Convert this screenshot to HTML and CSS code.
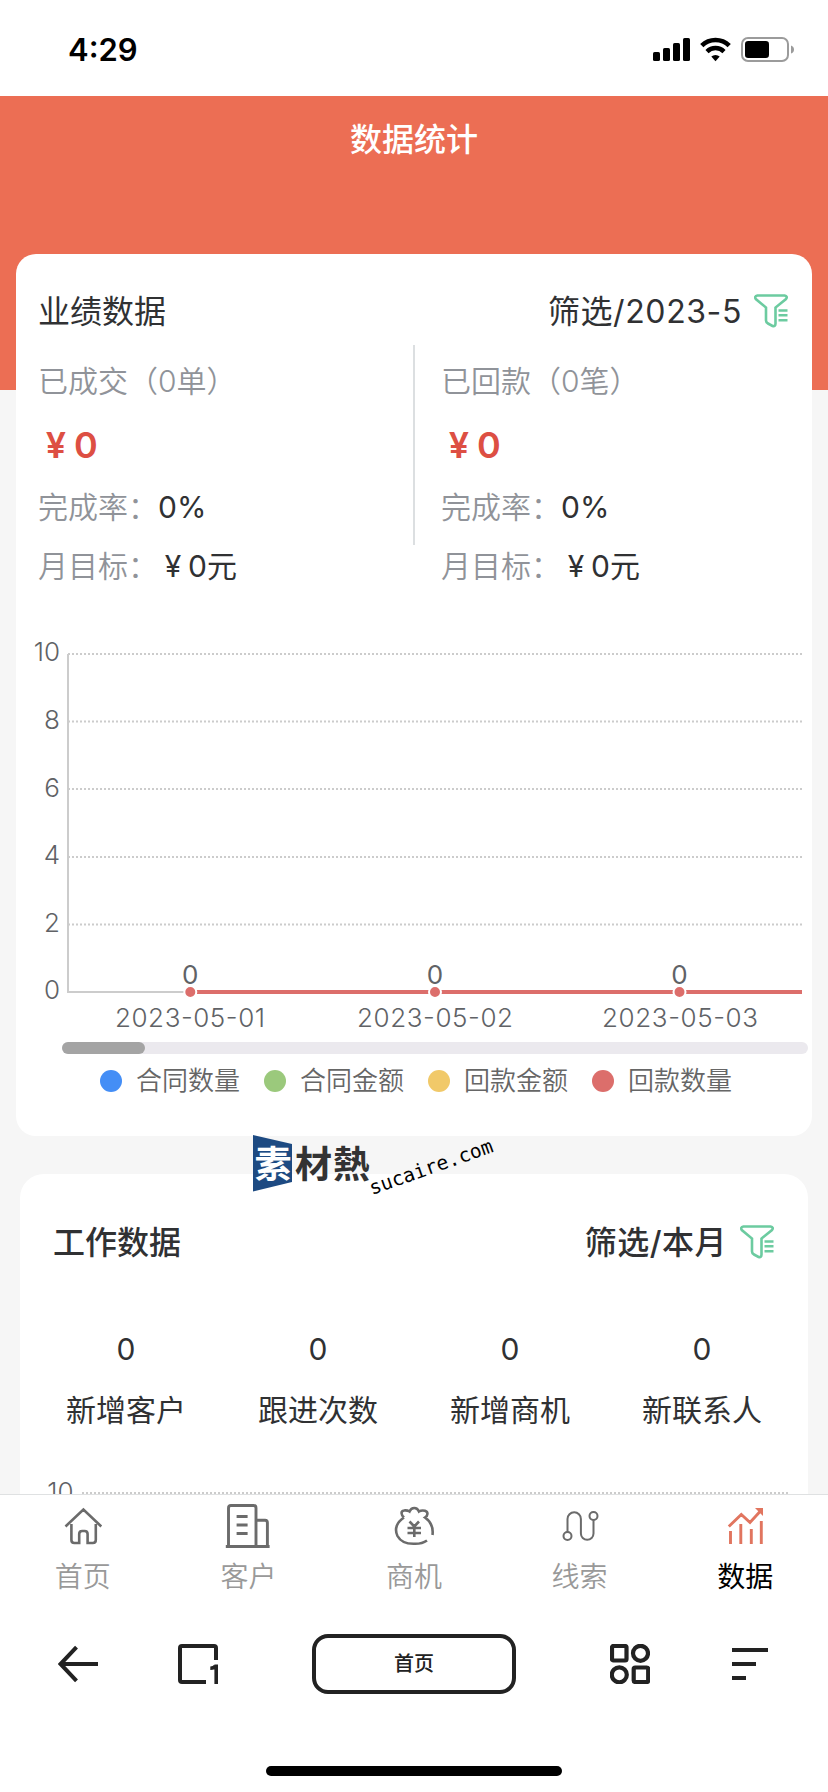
FILE: index.html
```html
<!DOCTYPE html>
<html lang="zh-CN">
<head>
<meta charset="utf-8">
<title>数据统计</title>
<link rel="stylesheet" href="styles.css">
</head>
<body>
<div class="phone">
  <header class="status">
    <span class="clock">4:29</span>
    <svg class="status-icons" viewBox="652 34 144 30" width="144" height="30">
      <rect x="653" y="52" width="7" height="9" rx="1.6"/>
      <rect x="663" y="48" width="7" height="13" rx="1.6"/>
      <rect x="673" y="43" width="7" height="18" rx="1.6"/>
      <rect x="683" y="38" width="7" height="23" rx="1.6"/>
      <path d="M701.8 45.6a19.5 19.5 0 0 1 27.4 0" fill="none" stroke="#000" stroke-width="4.6"/>
      <path d="M707 51.6a12 12 0 0 1 17 0" fill="none" stroke="#000" stroke-width="4.4"/>
      <path d="M711.3 56.6a6 6 0 0 1 8.4 0l-4.2 4.6z"/>
      <rect x="742" y="38" width="46" height="23" rx="6" fill="none" stroke="#9b9b9b" stroke-width="2"/>
      <rect x="745" y="41" width="24" height="17" rx="3.2"/>
      <path d="M791 45.500q3 1 3 4t-3 4z" fill="#9b9b9b"/>
    </svg>
  </header>

  <main class="page">
    <div class="hero"><h1>数据统计</h1></div>

    <section class="card sales">
      <div class="card-head">
        <h2>业绩数据</h2>
        <div class="filter"><span class="filter-date">筛选/2023-5</span>
          <svg class="funnel" viewBox="0 0 34 34"><path d="M3.500 1.500H30.500Q34 2.300 32 5L21.500 13.500V29.500Q21.500 32.800 18.500 32L14 29.500Q12 28.500 12 26.500V13.500L1.800 5Q0 2.300 3.500 1.500z"/><path d="M24.500 16.500h9M24.500 21.300h9M24.500 26.300h9"/></svg>
        </div>
      </div>
      <div class="totals">
        <div class="total">
          <p class="muted">已成交（0单）</p>
          <p class="amount"><span class="yen">¥</span>0</p>
          <p class="rate"><span class="muted">完成率：</span>0%</p>
          <p class="goal"><span class="muted">月目标：</span><span class="yen">¥</span>0元</p>
        </div>
        <div class="total">
          <p class="muted">已回款（0笔）</p>
          <p class="amount"><span class="yen">¥</span>0</p>
          <p class="rate"><span class="muted">完成率：</span>0%</p>
          <p class="goal"><span class="muted">月目标：</span><span class="yen">¥</span>0元</p>
        </div>
      </div>
      <svg class="chart" viewBox="16 620 796 422" width="796" height="422">
        <g class="grid">
          <path d="M68 654H802M68 721.500H802M68 789H802M68 857H802M68 924.500H802"/>
        </g>
        <path class="axis" d="M68 654V992H802"/>
        <g class="ylab">
          <text x="60" y="661">10</text><text x="60" y="729">8</text><text x="60" y="796.500">6</text>
          <text x="60" y="864">4</text><text x="60" y="932">2</text><text x="60" y="999">0</text>
        </g>
        <path d="M190 992H802" stroke="#dc6e6b" stroke-width="4"/>
        <g class="points">
          <circle cx="190.300" cy="992" r="6"/><circle cx="435" cy="992" r="6"/><circle cx="679.500" cy="992" r="6"/>
        </g>
        <g class="vlab">
          <text x="190.300" y="984">0</text><text x="435" y="984">0</text><text x="679.500" y="984">0</text>
        </g>
        <g class="xlab">
          <text x="115" y="1027" textLength="150">2023-05-01</text>
          <text x="357" y="1027" textLength="156">2023-05-02</text>
          <text x="602" y="1027" textLength="156">2023-05-03</text>
        </g>
      </svg>
      <div class="slider"><div class="thumb"></div></div>
      <ul class="legend">
        <li><i class="dot blue"></i>合同数量</li>
        <li><i class="dot green"></i>合同金额</li>
        <li><i class="dot yellow"></i>回款金额</li>
        <li><i class="dot red"></i>回款数量</li>
      </ul>
    </section>

    <section class="card work">
      <div class="card-head">
        <h2>工作数据</h2>
        <div class="filter"><span class="filter-month">筛选/本月</span>
          <svg class="funnel" viewBox="0 0 34 34"><path d="M3.500 1.500H30.500Q34 2.300 32 5L21.500 13.500V29.500Q21.500 32.800 18.500 32L14 29.500Q12 28.500 12 26.500V13.500L1.800 5Q0 2.300 3.500 1.500z"/><path d="M24.500 16.500h9M24.500 21.300h9M24.500 26.300h9"/></svg>
        </div>
      </div>
      <div class="stats">
        <div><b>0</b><span>新增客户</span></div>
        <div><b>0</b><span>跟进次数</span></div>
        <div><b>0</b><span>新增商机</span></div>
        <div><b>0</b><span>新联系人</span></div>
      </div>
      <svg class="chart" viewBox="20 1470 788 60" width="788" height="60">
        <g class="grid"><path d="M82 1493H788"/></g>
        <g class="ylab"><text x="73.500" y="1501">10</text></g>
      </svg>
    </section>
  </main>

  <nav class="tabs">
    <a class="tab">
      <svg viewBox="0 0 48 48"><path d="M6.500 24.500 24.400 7.500 42.300 24.500M12.400 22v16q0 3 3 3h4.800v-9q0-3 3-3h2.400q3 0 3 3v9h5.200q3 0 3-3v-16"/></svg>
      首页</a>
    <a class="tab">
      <svg viewBox="0 0 48 48" class="w3"><path d="M4.500 44V6q0-2.500 2.500-2.500h22.500q2.500 0 2.500 2.500v38M32 18.300h9q2.400 0 2.400 2.400V44M1.800 44.500h43.800M12.600 14.500h11M12.600 23h11M12.600 31.500h11"/></svg>
      客户</a>
    <a class="tab">
      <svg viewBox="0 0 48 48"><path d="M14 15.500C11 13 10.500 9 14 8.500Q17 8 19.500 9.500Q21 6 24.300 6Q27.500 6 29 9.500Q31.500 8 35 8.800C38.500 10 38 13.500 35 15.500C40 19 43.500 25 42.500 33M14 15.500C7 20 4 27 7.500 34C11 40.500 18 42 24.500 41.800Q32 42 37 38.500M19.500 19.500 24.300 24.500 29 19.500M17.500 26h13.500M17.500 31h13.500M24.300 24.500v10.500"/></svg>
      商机</a>
    <a class="tab">
      <svg viewBox="0 0 48 48" class="w2"><circle cx="11.500" cy="34" r="4"/><circle cx="37.500" cy="14" r="4"/><path d="M11.500 30V17a6.700 6.700 0 0 1 13.400 0V31.500a6.300 6.300 0 0 0 12.600 0V18"/></svg>
      线索</a>
    <a class="tab active">
      <svg viewBox="0 0 48 48" class="w3"><path d="M7.800 24.500 20.300 12.500 29 20.500 39.500 9M9.500 29v13M19.800 22v20M30.300 27v15M40.300 19v23"/><path class="tip" d="M34 6H42V14z"/></svg>
      数据</a>
  </nav>

  <div class="browser">
    <svg class="b-back" viewBox="0 0 40 40" width="40" height="40"><path d="M40 20H3M18.500 3.200 2.500 20 18.500 36.800"/></svg>
    <svg class="b-pages" viewBox="0 0 40 40" width="40" height="40"><path d="M38 16V4q0-2-2-2H4q-2 0-2 2v32q0 2 2 2h24"/><path class="page-count" d="M32.300 24.300q4 0 5.200-2.500M38.200 20.500V40"/></svg>
    <span class="b-title">首页</span>
    <svg class="b-apps" viewBox="0 0 40 40" width="40" height="40"><rect x="2" y="2" width="14.500" height="14.500" rx="1.500"/><circle cx="30.500" cy="9.300" r="7.500"/><circle cx="9.300" cy="30.800" r="7.500"/><rect x="23.700" y="23.500" width="14.500" height="14.500" rx="1.500"/></svg>
    <svg class="b-menu" viewBox="0 0 36 40" width="36" height="40"><path d="M0 6H36M0 20H24M0 34H14"/></svg>
  </div>
  <div class="home-bar"></div>

  <svg class="watermark" viewBox="250 1130 250 70" width="250" height="70">
    <path d="M253 1135 292 1144V1182L253 1191.500z" fill="#1d4a82"/>
    <text x="254.500" y="1178" class="wm-cn" fill="#fff">素</text>
    <text x="295" y="1178" class="wm-cn" fill="#333" textLength="75">材熱</text>
    <text class="wm-url" transform="translate(372 1195) rotate(-19.5)">sucaire.com</text>
  </svg>
</div>
</body>
</html>
```
FILE: styles.css
```css
* { box-sizing: border-box; margin: 0; padding: 0; }

body {
  width: 828px;
  height: 1792px;
  overflow: hidden;
  background: #fff;
  color: #303133;
  font-family: Inter, "Noto Sans CJK SC", sans-serif;
}

.phone {
  position: relative;
  display: flex;
  flex-direction: column;
  width: 828px;
  height: 1792px;
}

.status {
  flex: none;
  display: flex;
  justify-content: space-between;
  align-items: center;
  height: 96px;
  padding: 2px 32px 0 68px;
  color: #000;
}
.clock { padding-top: 2px; font-size: 31px; font-weight: 600; line-height: 40px; }

.page {
  flex: none;
  height: 1398px;
  overflow: hidden;
  background: #f6f6f6;
}
.hero { height: 294px; background: #ec6e54; text-align: center; }
.hero h1 {
  padding-top: 23px;
  color: #fff;
  font-size: 32px;
  font-weight: 500;
  line-height: 42px;
}

.card { background: #fff; }
.card-head { display: flex; justify-content: space-between; align-items: center; }
.card-head h2 { padding-top: 2px; font-size: 32px; font-weight: 400; line-height: 40px; }
.filter { display: flex; align-items: center; font-size: 32px; line-height: 40px; }
.filter-date { padding-top: 2px; letter-spacing: 0.6px; }
.filter-month { padding-top: 2px; letter-spacing: 0.5px; }
.funnel { width: 34px; height: 34px; fill: none; stroke: #6ccba0; stroke-width: 2.6; }

.sales {
  height: 882px;
  margin: -136px 16px 38px;
  border-radius: 20px;
}
.sales .card-head { height: 91px; padding: 22px 24px 0 22px; }
.sales .funnel { margin-left: 12px; }

.totals {
  display: grid;
  grid-template-columns: 397px 1fr;
  height: 275px;
}
.total {
  height: 200px;
  padding: 16px 0 0 22px;
  font-size: 30px;
  line-height: 40px;
  white-space: nowrap;
}
.total + .total { border-left: 2px solid #dcdfe1; padding-left: 26px; }
.muted { color: #909399; font-weight: 350; }
.amount { padding-top: 24px; color: #dd4f43; font-size: 36px; font-weight: 600; }
.yen { display: inline-block; width: 1em; text-align: center; }
.rate { padding-top: 22px; }
.goal { padding-top: 19px; }

.chart { display: block; }
.grid path { fill: none; stroke: #ccc; stroke-width: 2; stroke-dasharray: 2 2; }
.axis { fill: none; stroke: #ccc; stroke-width: 2; }
.chart text { font-size: 26px; font-weight: 350; fill: #606266; }
.ylab text { text-anchor: end; }
.chart .vlab text { text-anchor: middle; font-weight: 400; }
.points circle { fill: #dc6e6b; stroke: #fff; stroke-width: 2; }

.slider {
  width: 746px;
  height: 12px;
  margin-left: 46px;
  border-radius: 6px;
  background: #ebe9ee;
}
.thumb { width: 83px; height: 12px; border-radius: 6px; background: #a4a4a4; }

.legend {
  display: flex;
  gap: 24px;
  padding: 7px 0 0 84px;
  list-style: none;
  color: #666;
  font-size: 26px;
  font-weight: 350;
  line-height: 40px;
}
.legend li { display: flex; align-items: center; gap: 14px; }
.dot { width: 22px; height: 22px; border-radius: 50%; }
.blue { background: #448ef6; }
.green { background: #9bc97c; }
.yellow { background: #f1c969; }
.red { background: #dc6e6b; }

.work { height: 400px; margin: 0 20px; border-radius: 24px 24px 0 0; }
.work .card-head { height: 136px; padding: 0 34px 0 33px; font-weight: 500; }
.work h2 { font-weight: 500; }
.work .funnel { margin-left: 13px; }
.stats {
  display: grid;
  grid-template-columns: repeat(4, 192px);
  height: 160px;
  padding: 19px 10px 0;
  font-size: 30px;
  line-height: 40px;
  text-align: center;
}
.stats b, .stats span { display: block; }
.stats b { font-weight: 400; }
.stats span { padding-top: 21px; }

.tabs {
  flex: none;
  display: grid;
  grid-template-columns: repeat(5, 1fr);
  height: 129px;
  border-top: 1px solid #dfe1e2;
  background: #fff;
}
.tab {
  display: flex;
  flex-direction: column;
  align-items: center;
  padding-top: 7px;
  color: #999;
  font-size: 28px;
  font-weight: 350;
  line-height: 54px;
}
.tab svg { width: 48px; height: 48px; fill: none; stroke: #6b6b6b; stroke-width: 2.6; }
.tab svg.w2 { stroke-width: 2; }
.tab svg.w3 { stroke-width: 2.9; }
.tab.active { color: #000; font-weight: 400; }
.tab.active svg { stroke: #e1755f; }
.tab .tip { fill: #e1755f; stroke: none; }

.browser {
  flex: none;
  display: flex;
  align-items: center;
  height: 82px;
  padding-left: 58px;
}
.browser svg { display: block; fill: none; stroke: #222; stroke-width: 4; }
.browser .b-pages { margin: 0 94px 0 80px; }
.browser .page-count { stroke-width: 3.6; }
.b-title {
  width: 204px;
  height: 60px;
  border: 4px solid #222;
  border-radius: 16px;
  color: #222;
  font-size: 20px;
  font-weight: 500;
  line-height: 53px;
  text-align: center;
}
.browser .b-apps { margin: 0 82px 0 94px; stroke-width: 4.2; }

.home-bar {
  flex: none;
  width: 296px;
  height: 10px;
  margin: 61px auto 0;
  border-radius: 5px;
  background: #000;
}

.watermark { position: absolute; left: 250px; top: 1130px; }
.wm-cn { font-size: 37px; font-weight: 700; }
.wm-url { font-family: "DejaVu Sans Mono", monospace; font-size: 19.6px; fill: #000; }
```
